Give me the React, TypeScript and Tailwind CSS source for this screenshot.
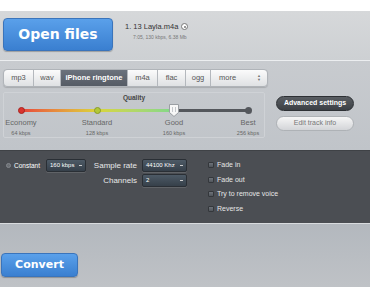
import React from "react";

const font = { fontFamily: '"Liberation Sans", Arial, sans-serif' };
const bold = { fontFamily: '"DejaVu Sans", Verdana, sans-serif' };

function Tab({ label, active, first, last, w }: { label: string; active?: boolean; first?: boolean; last?: boolean; w: string }) {
  return (
    <div
      className={`${w} h-full flex items-center justify-center whitespace-nowrap text-[7.5px] border-r border-[#b4b8bd] ${
        active
          ? "bg-gradient-to-b from-[#6b727c] to-[#565c65] text-white font-bold"
          : "bg-gradient-to-b from-[#fbfbfb] to-[#dfe1e3] text-[#555]"
      } ${first ? "rounded-l-[4px]" : ""} ${last ? "rounded-r-[4px] border-r-0" : ""}`}
    >
      {label}
    </div>
  );
}

function DarkSelect({ label, w }: { label: string; w: string }) {
  return (
    <div className={`${w} h-[13px] rounded-[2px] bg-gradient-to-b from-[#4d5a66] to-[#36404a] border border-[#2a2f35] shadow-[0_1px_0_rgba(255,255,255,0.12)] flex items-center justify-between px-[3px] text-white text-[6px] whitespace-nowrap`}>
      <span>{label}</span>
      <span className="w-[3px] h-[1px] bg-[#ccc]" />
    </div>
  );
}

function Check({ label }: { label: string }) {
  return (
    <div className="flex items-center gap-[3px] h-[14.5px] text-[7px] text-[#e6e6e6] whitespace-nowrap">
      <span className="w-[6px] h-[6px] bg-gradient-to-b from-[#6e737a] to-[#50555b] border border-[#34373b] rounded-[1px]" />
      <span>{label}</span>
    </div>
  );
}

export default function App() {
  return (
    <div className="w-[370px] h-[300px] bg-white flex flex-col overflow-hidden" style={font}>
      <div className="h-[11px] bg-white" />
      {/* top panel */}
      <div className="h-[49px] bg-gradient-to-b from-[#d6d8da] to-[#cdd0d3] flex items-start pl-[3px] pt-[7px]">
        <div style={bold} className="w-[110px] h-[33px] rounded-[4px] bg-gradient-to-b from-[#5aa0ea] to-[#3a7fd0] border border-[#3a74bb] shadow-[0_1px_1px_rgba(0,0,0,0.25)] flex items-center justify-center text-white font-bold text-[14px]">
          Open files
        </div>
        <div className="ml-[12px] mt-[3px] flex flex-col">
          <div className="flex items-center gap-[3px] text-[7.5px] text-[#333] whitespace-nowrap">
            <span>1. 13 Layla.m4a</span>
            <span className="w-[7px] h-[7px] rounded-full border-[1.5px] border-[#777] bg-white flex items-center justify-center">
              <span className="w-[2px] h-[2px] rounded-full bg-[#777]" />
            </span>
          </div>
          <div className="ml-[8px] mt-[2px] text-[5px] text-[#777] whitespace-nowrap">7:05, 130 kbps, 6.38 Mb</div>
        </div>
      </div>
      {/* middle */}
      <div className="h-[90px] border-t border-[#eceef0] bg-gradient-to-b from-[#c8cbcf] to-[#c0c4c9] flex flex-col px-[3px]">
        <div className="mt-[8px] h-[18px] w-[265px] flex rounded-[4px] border border-[#b0b4b9] shadow-[0_1px_1px_rgba(0,0,0,0.15)]">
          <Tab label="mp3" w="w-[30px]" first />
          <Tab label="wav" w="w-[27px]" />
          <Tab label="iPhone ringtone" w="w-[67px]" active />
          <Tab label="m4a" w="w-[30px]" />
          <Tab label="flac" w="w-[28px]" />
          <Tab label="ogg" w="w-[25px]" />
          <div className="flex-1 h-full rounded-r-[4px] bg-gradient-to-b from-[#fbfbfb] to-[#dfe1e3] flex items-center justify-between pl-[8px] pr-[6px] text-[7.5px] text-[#555]">
            <span>more</span>
            <span className="flex flex-col items-center text-[4px] leading-[4px] text-[#777]">
              <span>▲</span>
              <span>▼</span>
            </span>
          </div>
        </div>
        <div className="flex mt-[5px]">
          {/* quality panel */}
          <div className="w-[262px] h-[46px] border border-[#cfd2d6] rounded-[2px] flex flex-col relative">
            <div className="text-center text-[6.5px] font-bold text-[#444] mt-[0px]">Quality</div>
            <div className="relative h-[14px]">
              <div className="absolute left-[17px] top-[6px] w-[153px] h-[3px] rounded-full bg-gradient-to-r from-[#e6413c] via-[#d8d53a] to-[#7ed88a]" />
              <div className="absolute left-[170px] top-[6px] w-[75px] h-[3px] bg-[#54575c]" />
              <div className="absolute left-[14px] top-[4px] w-[7px] h-[7px] rounded-full bg-[#d9342f] border border-[#a62522]" />
              <div className="absolute left-[90px] top-[4px] w-[7px] h-[7px] rounded-full bg-[#b2c83a] border border-[#8a9b2a]" />
              <div className="absolute left-[241px] top-[4px] w-[7px] h-[7px] rounded-full bg-[#54575c]" />
              <svg className="absolute left-[164px] top-[0px]" width="12" height="15" viewBox="0 0 12 15">
                <path d="M1.5 1.5 H10.5 V9.5 L6 13.5 L1.5 9.5 Z" fill="#f7f7f7" stroke="#9a9ea3" strokeWidth="1" />
                <line x1="4.5" y1="4" x2="4.5" y2="9" stroke="#c5c8cc" />
                <line x1="7.5" y1="4" x2="7.5" y2="9" stroke="#c5c8cc" />
              </svg>
            </div>
            <div className="relative h-[20px] text-[#666]">
              {[
                ["Economy", "64 kbps", 17],
                ["Standard", "128 kbps", 93],
                ["Good", "160 kbps", 170],
                ["Best", "256 kbps", 244],
              ].map(([a, b, x]) => (
                <div key={a as string} className="absolute top-[0px] flex flex-col items-center w-[60px] whitespace-nowrap" style={{ left: (x as number) - 30 }}>
                  <span className="text-[7.5px]">{a}</span>
                  <span className="text-[5.5px] mt-[1px]">{b}</span>
                </div>
              ))}
            </div>
          </div>
          <div className="ml-[11px] mt-[4px] flex flex-col gap-[5px]">
            <div className="w-[78px] h-[15px] rounded-full bg-gradient-to-b from-[#5a5e63] to-[#3c4045] border border-[#2d3034] flex items-center justify-center text-white font-bold text-[7px] whitespace-nowrap">
              Advanced settings
            </div>
            <div className="w-[78px] h-[15px] rounded-full bg-gradient-to-b from-[#f6f6f6] to-[#d3d5d8] border border-[#aeb2b6] flex items-center justify-center text-[#777] text-[7px] whitespace-nowrap">
              Edit track info
            </div>
          </div>
        </div>
      </div>
      {/* dark panel */}
      <div className="h-[73px] bg-[#4b4e53] border-t border-[#3f4246] flex pt-[8px]">
        <div className="ml-[6px] w-[76px] flex items-start">
          <div className="flex items-center gap-[3px] h-[13px] text-[6.5px] text-white whitespace-nowrap">
            <span className="w-[5px] h-[5px] rounded-full bg-[#6a6e73] border border-[#85898e]" />
            <span>Constant</span>
          </div>
          <div className="ml-[6px]">
            <DarkSelect label="160 kbps" w="w-[40px]" />
          </div>
        </div>
        <div className="flex flex-col gap-[2px]">
          <div className="flex items-center h-[13px]">
            <span className="w-[55px] text-right text-[8px] text-[#e8e8e8] whitespace-nowrap">Sample rate</span>
            <div className="ml-[5px]"><DarkSelect label="44100 Khz" w="w-[45px]" /></div>
          </div>
          <div className="flex items-center h-[13px]">
            <span className="w-[55px] text-right text-[8px] text-[#e8e8e8] whitespace-nowrap">Channels</span>
            <div className="ml-[5px]"><DarkSelect label="2" w="w-[45px]" /></div>
          </div>
        </div>
        <div className="ml-[21px] -mt-[1px] flex flex-col">
          <Check label="Fade in" />
          <Check label="Fade out" />
          <Check label="Try to remove voice" />
          <Check label="Reverse" />
        </div>
      </div>
      {/* bottom */}
      <div className="h-[64px] border-t border-[#d9dcdf] bg-gradient-to-b from-[#b3b8be] to-[#bfc2c6] flex items-end pl-[1px] pb-[10px]">
        <div style={bold} className="w-[77px] h-[24px] rounded-[4px] bg-gradient-to-b from-[#5aa0ea] to-[#3a7fd0] border border-[#3a74bb] shadow-[0_1px_1px_rgba(0,0,0,0.25)] flex items-center justify-center text-white font-bold text-[11px]">
          Convert
        </div>
      </div>
      <div className="flex-1 bg-white" />
    </div>
  );
}
